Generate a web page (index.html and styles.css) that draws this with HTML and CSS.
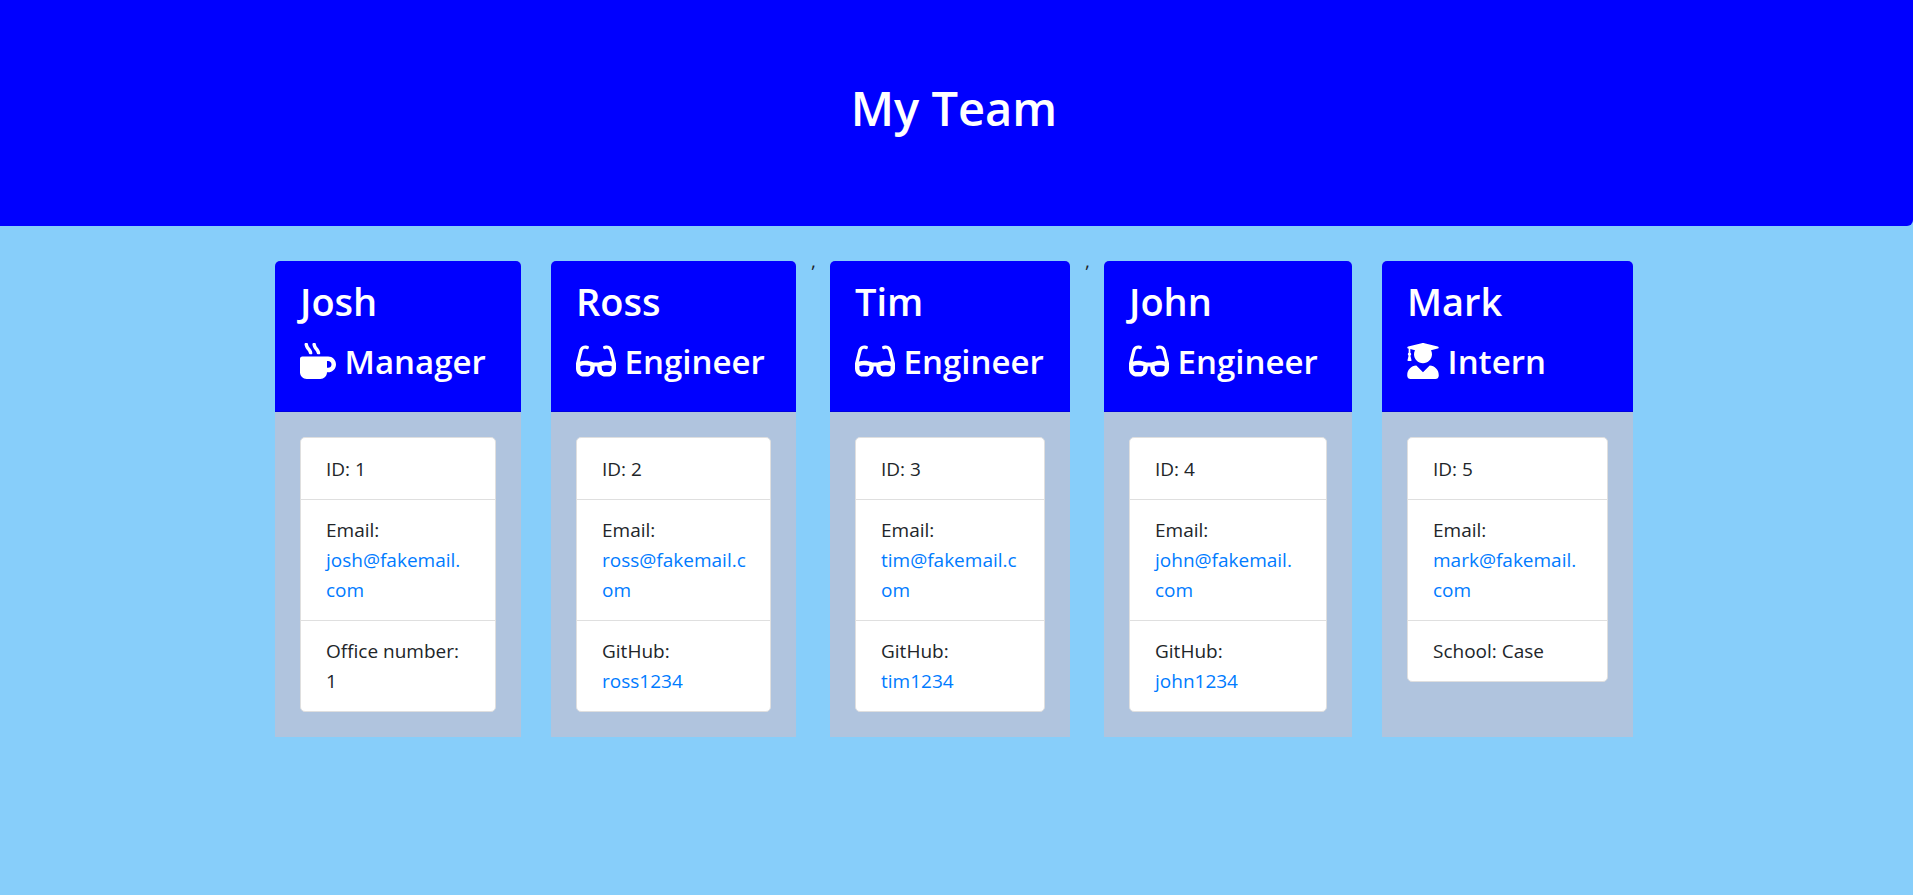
FILE: index.html
```html
<!DOCTYPE html>
<html lang="en">
<head>
<meta charset="utf-8">
<meta name="viewport" content="width=device-width, initial-scale=1">
<title>My Team</title>
<link rel="stylesheet" href="styles.css">
</head>
<body>
<svg class="sprite" aria-hidden="true">
  <symbol id="mug" viewBox="0 0 512 512"><path d="M127.1 146.5c1.3 7.7 8 13.5 16 13.5h16.5c9.8 0 17.6-8.5 16.3-18-3.8-28.2-16.4-54.2-36.6-74.7-14.4-14.7-23.6-33.3-26.4-53.5C111.8 5.9 105 0 96.8 0H80.4C70.6 0 63 8.5 64.1 18c3.9 31.9 18 61.3 40.6 84.4 12 12.2 19.7 27.5 22.4 44.1zm112 0c1.3 7.7 8 13.5 16 13.5h16.5c9.8 0 17.6-8.5 16.3-18-3.8-28.2-16.4-54.2-36.6-74.7-14.4-14.7-23.6-33.3-26.4-53.5C223.8 5.9 217 0 208.8 0h-16.4c-9.8 0-17.5 8.5-16.3 18 3.9 31.9 18 61.3 40.6 84.4 12 12.2 19.7 27.5 22.4 44.1zM400 192H32c-17.7 0-32 14.3-32 32v192c0 53 43 96 96 96h192c53 0 96-43 96-96h16c61.8 0 112-50.2 112-112s-50.2-112-112-112zm0 160h-16v-96h16c26.5 0 48 21.5 48 48s-21.5 48-48 48z"/></symbol>
  <symbol id="glasses" viewBox="0 0 576 512"><path d="M574.1 280.37L528.75 98.66c-5.91-23.7-21.59-44.05-43-55.81-21.44-11.73-46.97-14.11-70.19-6.33l-15.25 5.08c-8.39 2.79-12.92 11.86-10.12 20.24l5.06 15.18c2.79 8.38 11.85 12.91 20.23 10.12l13.18-4.39c10.87-3.62 23-3.57 33.16 1.73 10.29 5.37 17.57 14.56 20.37 25.82l38.46 153.82c-22.19-6.81-49.79-12.46-81.2-12.46-34.77 0-73.98 7.02-114.85 26.74h-73.18c-40.87-19.74-80.08-26.75-114.86-26.75-31.42 0-59.02 5.65-81.21 12.46l38.46-153.83c2.79-11.25 10.09-20.45 20.38-25.81 10.16-5.3 22.28-5.35 33.15-1.73l13.17 4.39c8.38 2.79 17.44-1.74 20.23-10.12l5.06-15.18c2.8-8.38-1.73-17.45-10.12-20.24l-15.25-5.08c-23.22-7.78-48.75-5.41-70.19 6.33-21.41 11.77-37.09 32.11-43 55.81L1.9 280.37A64.218 64.218 0 0 0 0 295.86v70.25C0 429.01 51.58 480 115.2 480h37.12c60.28 0 110.37-45.94 114.88-105.37l2.93-38.63h35.75l2.93 38.63C313.31 434.06 363.4 480 423.68 480h37.12c63.62 0 115.2-50.99 115.2-113.88v-70.25c0-5.23-.64-10.43-1.9-15.5zm-370.72 89.42c-1.97 25.91-24.4 46.21-51.06 46.21H115.2C86.97 416 64 393.62 64 366.11v-37.54c18.12-6.49 43.42-12.92 72.58-12.92 23.86 0 47.26 4.33 69.93 12.92l-3.13 41.22zM512 366.12c0 27.51-22.97 49.88-51.2 49.88h-37.12c-26.67 0-49.1-20.3-51.06-46.21l-3.13-41.22c22.67-8.59 46.08-12.92 69.95-12.92 29.12 0 54.43 6.44 72.55 12.93v37.54z"/></symbol>
  <symbol id="graduate" viewBox="0 0 448 512"><path d="M319.4 320.6L224 416l-95.4-95.4C57.1 323.7 0 382.2 0 454.4v9.6c0 26.5 21.5 48 48 48h352c26.5 0 48-21.5 48-48v-9.6c0-72.2-57.1-130.7-128.6-133.8zM13.6 79.8l6.4 1.5v58.4c-7 4.2-12 11.5-12 20.3 0 8.4 4.6 15.4 11.1 19.7L3.5 242c-1.7 6.9 2.1 14 7.6 14h41.8c5.5 0 9.3-7.1 7.6-14l-15.6-62.3C51.4 175.4 56 168.4 56 160c0-8.8-5-16.1-12-20.3V87.1l66 15.9c-8.6 17.2-14 36.4-14 57 0 70.7 57.3 128 128 128s128-57.3 128-128c0-20.6-5.3-39.8-14-57l96.3-23.2c18.2-4.4 18.2-27.1 0-31.5l-190.4-46c-13-3.1-26.7-3.1-39.7 0L13.6 48.2c-18.1 4.4-18.1 27.2 0 31.6z"/></symbol>
</svg>

<header class="banner">
  <h1 class="banner-title">My Team</h1>
</header>

<main class="team">
  <section class="card card-manager">
    <div class="card-header">
      <h2 class="card-name">Josh</h2>
      <h3 class="card-role"><svg class="icon" aria-hidden="true"><use href="#mug"/></svg> Manager</h3>
    </div>
    <div class="card-body">
      <ul class="facts">
        <li>ID: 1</li>
        <li>Email: <a href="mailto:josh@fakemail.com">josh@fakemail.<wbr>com</a></li>
        <li>Office number: 1</li>
      </ul>
    </div>
  </section>
  <section class="card card-ross">
    <div class="card-header">
      <h2 class="card-name">Ross</h2>
      <h3 class="card-role"><svg class="icon icon-wide" aria-hidden="true"><use href="#glasses"/></svg> Engineer</h3>
    </div>
    <div class="card-body">
      <ul class="facts">
        <li>ID: 2</li>
        <li>Email: <a href="mailto:ross@fakemail.com">ross@fakemail.c<wbr>om</a></li>
        <li>GitHub: <a href="https://github.com/ross1234">ross1234</a></li>
      </ul>
    </div>
  </section>
  <span class="comma">,</span>
  <section class="card card-tim">
    <div class="card-header">
      <h2 class="card-name">Tim</h2>
      <h3 class="card-role"><svg class="icon icon-wide" aria-hidden="true"><use href="#glasses"/></svg> Engineer</h3>
    </div>
    <div class="card-body">
      <ul class="facts">
        <li>ID: 3</li>
        <li>Email: <a href="mailto:tim@fakemail.com">tim@fakemail.c<wbr>om</a></li>
        <li>GitHub: <a href="https://github.com/tim1234">tim1234</a></li>
      </ul>
    </div>
  </section>
  <span class="comma">,</span>
  <section class="card card-john">
    <div class="card-header">
      <h2 class="card-name">John</h2>
      <h3 class="card-role"><svg class="icon icon-wide" aria-hidden="true"><use href="#glasses"/></svg> Engineer</h3>
    </div>
    <div class="card-body">
      <ul class="facts">
        <li>ID: 4</li>
        <li>Email: <a href="mailto:john@fakemail.com">john@fakemail.<wbr>com</a></li>
        <li>GitHub: <a href="https://github.com/john1234">john1234</a></li>
      </ul>
    </div>
  </section>
  <section class="card card-intern">
    <div class="card-header">
      <h2 class="card-name">Mark</h2>
      <h3 class="card-role"><svg class="icon icon-narrow" aria-hidden="true"><use href="#graduate"/></svg> Intern</h3>
    </div>
    <div class="card-body">
      <ul class="facts">
        <li>ID: 5</li>
        <li>Email: <a href="mailto:mark@fakemail.com">mark@fakemail.<wbr>com</a></li>
        <li>School: Case</li>
      </ul>
    </div>
  </section>
</main>
</body>
</html>
```
FILE: styles.css
```css
*,
*::before,
*::after {
  box-sizing: border-box;
}

body {
  margin: 0;
  background: #87cefa;
  color: #212529;
  font: 400 19px/30px "Segoe UI", "Open Sans", "Noto Sans", sans-serif;
}

.sprite {
  display: none;
}

.banner {
  padding: 78px 45px 80px 40px;
  margin-bottom: 20px;
  border-radius: 0 0 6px 0;
  background: #0000ff;
  color: #ffffff;
  text-align: center;
}

.banner-title {
  margin: 0 0 8px;
  font-size: 47px;
  font-weight: 600;
  line-height: 60px;
}

.team {
  display: flex;
  max-width: 1393px;
  margin: 0 auto;
  padding-right: 5px;
}

.card {
  min-width: 0;
  margin: 15px;
  border-radius: 5px 5px 0 0;
  background: #b0c4de;
  overflow: hidden;
}

.card-manager { flex: 246 1 0; }
.card-ross { flex: 245 1 0; }
.card-tim { flex: 240 1 0; }
.card-john { flex: 248 1 0; }
.card-intern { flex: 251 1 0; }

.comma {
  flex: 0 0 4px;
  min-width: 0;
}

.card-header {
  padding: 16px 25px 14px;
  border-bottom: 1px solid #0000df;
  background: #0000ff;
  color: #ffffff;
}

.card-name,
.card-role {
  margin: 0;
  font-weight: 600;
  white-space: nowrap;
}

.card-name {
  margin-bottom: 16px;
  font-size: 38px;
  line-height: 48px;
}

.card-role {
  margin-bottom: 14px;
  font-size: 33px;
  line-height: 42px;
}

.icon {
  width: 36px;
  height: 36px;
  fill: currentColor;
  vertical-align: -5px;
}

.icon-wide {
  width: 40px;
}

.icon-narrow {
  width: 32px;
}

.card-body {
  padding: 25px;
}

.facts {
  margin: 0;
  padding: 1px 0 0;
  border: 1px solid #dfdfdf;
  border-radius: 5px;
  background: #ffffff;
  list-style: none;
}

.facts li {
  padding: 15px 22px 15px 25px;
  overflow-wrap: break-word;
}

.facts li + li {
  border-top: 1px solid #dfdfdf;
}

.facts a {
  color: #007bff;
  text-decoration: none;
}
```
